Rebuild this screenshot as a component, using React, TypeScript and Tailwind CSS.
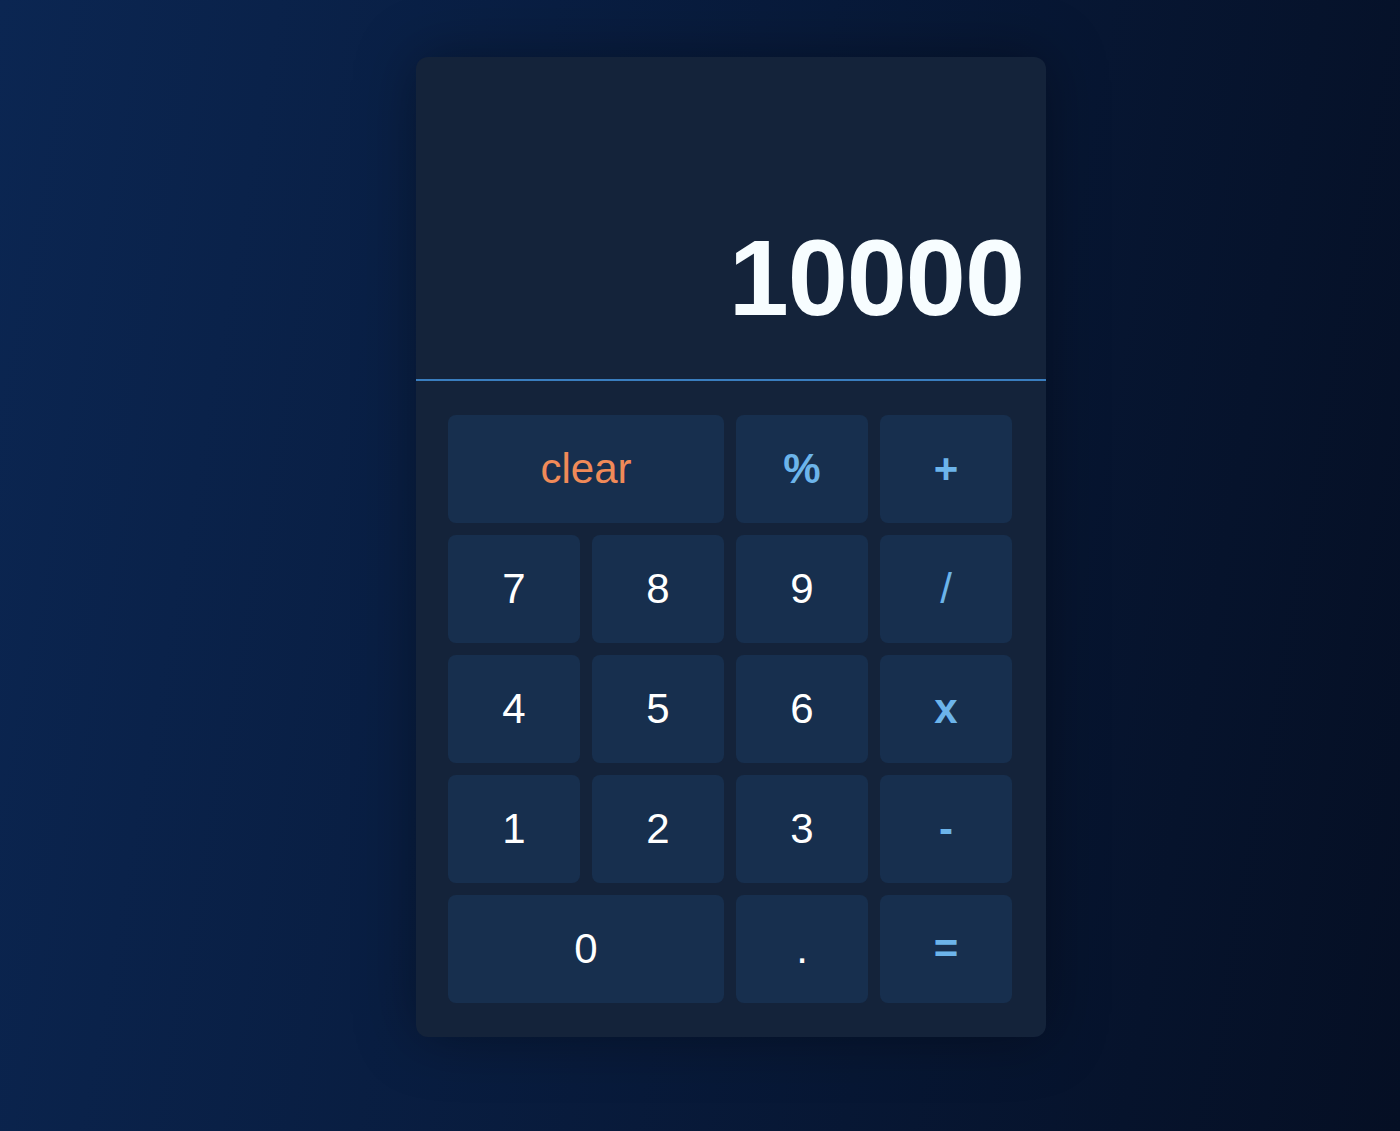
import React from 'react';

type Key = {
  label: string;
  kind: 'num' | 'op' | 'clear';
  wide?: boolean;
};

const keys: Key[] = [
  { label: 'clear', kind: 'clear', wide: true },
  { label: '%', kind: 'op' },
  { label: '+', kind: 'op' },
  { label: '7', kind: 'num' },
  { label: '8', kind: 'num' },
  { label: '9', kind: 'num' },
  { label: '/', kind: 'op' },
  { label: '4', kind: 'num' },
  { label: '5', kind: 'num' },
  { label: '6', kind: 'num' },
  { label: 'x', kind: 'op' },
  { label: '1', kind: 'num' },
  { label: '2', kind: 'num' },
  { label: '3', kind: 'num' },
  { label: '-', kind: 'op' },
  { label: '0', kind: 'num', wide: true },
  { label: '.', kind: 'num' },
  { label: '=', kind: 'op' },
];

const textColors = {
  num: 'text-white',
  op: 'text-[#6cb4ea] font-bold',
  clear: 'text-[#f08a58]',
};

export default function App() {
  return (
    <div className="h-[1131px] w-full overflow-hidden bg-linear-[100deg] from-[#0b2652] to-[#050f24] font-['Liberation_Sans',Arial,sans-serif]">
      <div className="ml-[416px] pt-[57px]">
        <div className="w-[630px] rounded-xl bg-[#14233a] shadow-[0_0_60px_rgba(0,0,0,0.35)]">
          <div className="flex h-[324px] items-end justify-end border-b-2 border-[#3a7ebf] pr-[22px] pb-[47px]">
            <span className="text-[108px] font-bold leading-none tracking-[-1px] text-[#f7fdff]">10000</span>
          </div>
          <div className="grid grid-cols-[repeat(4,132px)] auto-rows-[108px] gap-3 pt-[34px] pb-[34px] pl-8">
            {keys.map((k) => (
              <button
                key={k.label}
                className={`flex items-center justify-center rounded-lg bg-[#172f4e] text-[42px] leading-none ${textColors[k.kind]} ${k.label === '/' ? 'font-normal' : ''} ${k.wide ? 'col-span-2' : ''}`}
              >
                {k.label}
              </button>
            ))}
          </div>
        </div>
      </div>
    </div>
  );
}
